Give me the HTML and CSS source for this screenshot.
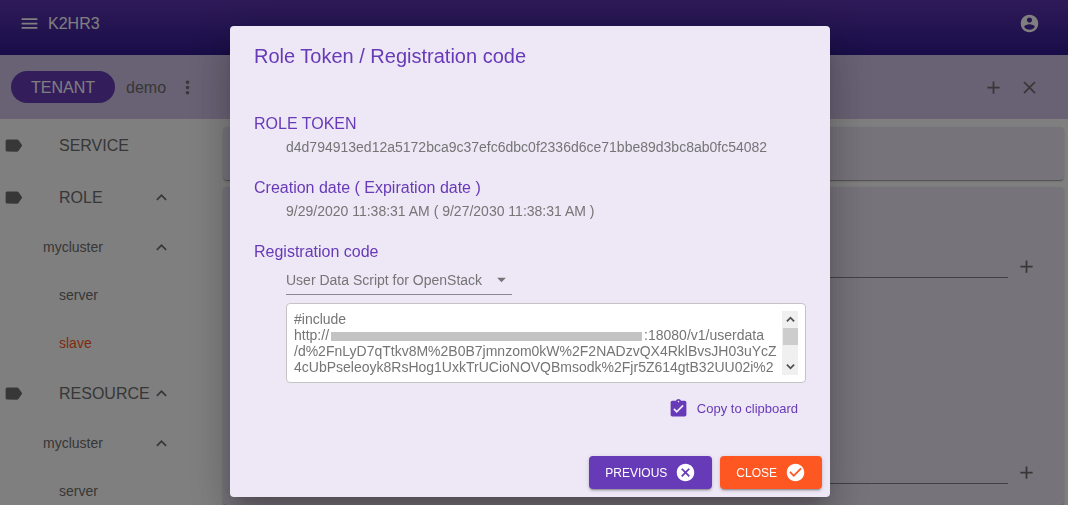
FILE: index.html
```html
<!DOCTYPE html>
<html lang="en">
<head>
<meta charset="utf-8">
<title>K2HR3</title>
<link rel="stylesheet" href="styles.css">
</head>
<body>
<svg class="sprite" aria-hidden="true">
  <symbol id="i-menu" viewBox="0 0 24 24"><path d="M3 18h18v-2H3v2zm0-5h18v-2H3v2zm0-7v2h18V6H3z"/></symbol>
  <symbol id="i-account" viewBox="0 0 24 24"><path d="M12 2C6.480 2 2 6.480 2 12s4.480 10 10 10 10-4.480 10-10S17.520 2 12 2zm0 3c1.660 0 3 1.340 3 3s-1.340 3-3 3-3-1.340-3-3 1.340-3 3-3zm0 14.200c-2.500 0-4.710-1.280-6-3.220.030-1.990 4-3.080 6-3.080 1.990 0 5.970 1.090 6 3.080-1.290 1.940-3.500 3.220-6 3.220z"/></symbol>
  <symbol id="i-more" viewBox="0 0 24 24"><path d="M12 8c1.100 0 2-.9 2-2s-.9-2-2-2-2 .9-2 2 .9 2 2 2zm0 2c-1.100 0-2 .9-2 2s.9 2 2 2 2-.9 2-2-.9-2-2-2zm0 6c-1.100 0-2 .9-2 2s.9 2 2 2 2-.9 2-2-.9-2-2-2z"/></symbol>
  <symbol id="i-add" viewBox="0 0 24 24"><path d="M19 13h-6v6h-2v-6H5v-2h6V5h2v6h6v2z"/></symbol>
  <symbol id="i-close" viewBox="0 0 24 24"><path d="M19 6.410L17.590 5 12 10.590 6.410 5 5 6.410 10.590 12 5 17.590 6.410 19 12 13.410 17.590 19 19 17.590 13.410 12z"/></symbol>
  <symbol id="i-label" viewBox="0 0 24 24"><path d="M17.630 5.840C17.270 5.330 16.670 5 16 5L5 5.010C3.900 5.010 3 5.900 3 7v10c0 1.100.9 1.990 2 1.990L16 19c.67 0 1.270-.33 1.630-.84L22 12l-4.370-6.160z"/></symbol>
  <symbol id="i-less" viewBox="0 0 24 24"><path d="M12 8l-6 6 1.410 1.410L12 10.830l4.590 4.580L18 14z"/></symbol>
  <symbol id="i-drop" viewBox="0 0 24 24"><path d="M7 10l5 5 5-5z"/></symbol>
  <symbol id="i-clip" viewBox="0 0 24 24"><path d="M19 3h-4.180C14.400 1.840 13.300 1 12 1c-1.300 0-2.400.84-2.820 2H5c-1.100 0-2 .9-2 2v14c0 1.100.9 2 2 2h14c1.100 0 2-.9 2-2V5c0-1.100-.9-2-2-2zm-7 0c.55 0 1 .45 1 1s-.45 1-1 1-1-.45-1-1 .45-1 1-1zm-2 14l-4-4 1.410-1.410L10 14.170l6.590-6.590L18 9l-8 8z"/></symbol>
  <symbol id="i-cancel" viewBox="0 0 24 24"><path d="M12 2C6.470 2 2 6.470 2 12s4.470 10 10 10 10-4.470 10-10S17.530 2 12 2zm5 13.590L15.590 17 12 13.410 8.410 17 7 15.590 10.590 12 7 8.410 8.410 7 12 10.590 15.590 7 17 8.410 13.410 12 17 15.590z"/></symbol>
  <symbol id="i-check" viewBox="0 0 24 24"><path d="M12 2C6.480 2 2 6.480 2 12s4.480 10 10 10 10-4.480 10-10S17.520 2 12 2zm-2 15l-5-5 1.410-1.410L10 14.170l7.590-7.590L19 8l-9 9z"/></symbol>
  <symbol id="i-up" viewBox="0 0 10 10"><path d="M1 7l4-4 4 4" fill="none" stroke="currentColor" stroke-width="2"/></symbol>
  <symbol id="i-down" viewBox="0 0 10 10"><path d="M1 3l4 4 4-4" fill="none" stroke="currentColor" stroke-width="2"/></symbol>
</svg>

<div class="app">
  <header class="appbar">
    <button class="icon-btn" aria-label="Menu"><svg class="icon"><use href="#i-menu"/></svg></button>
    <span class="brand">K2HR3</span>
    <button class="icon-btn push" aria-label="Account"><svg class="icon"><use href="#i-account"/></svg></button>
  </header>
  <div class="toolbar">
    <button class="chip">TENANT</button>
    <span class="tenant">demo</span>
    <button class="icon-btn" aria-label="More"><svg class="icon"><use href="#i-more"/></svg></button>
    <div class="tools push">
      <button class="icon-btn" aria-label="Add"><svg class="icon"><use href="#i-add"/></svg></button>
      <button class="icon-btn" aria-label="Close"><svg class="icon"><use href="#i-close"/></svg></button>
    </div>
  </div>
  <div class="body">
    <nav class="tree">
      <a class="node top" href="#"><svg class="icon"><use href="#i-label"/></svg><span class="name">SERVICE</span></a>
      <a class="node top" href="#"><svg class="icon"><use href="#i-label"/></svg><span class="name">ROLE</span><svg class="icon fold"><use href="#i-less"/></svg></a>
      <a class="node group" href="#"><span class="name">mycluster</span><svg class="icon fold"><use href="#i-less"/></svg></a>
      <a class="node leaf" href="#">server</a>
      <a class="node leaf selected" href="#">slave</a>
      <a class="node top" href="#"><svg class="icon"><use href="#i-label"/></svg><span class="name">RESOURCE</span><svg class="icon fold"><use href="#i-less"/></svg></a>
      <a class="node group" href="#"><span class="name">mycluster</span><svg class="icon fold"><use href="#i-less"/></svg></a>
      <a class="node leaf" href="#">server</a>
    </nav>
    <main class="content">
      <section class="card summary"></section>
      <section class="card detail">
        <div class="field"><input type="text" aria-label="Host name"><button class="icon-btn" aria-label="Add host name"><svg class="icon"><use href="#i-add"/></svg></button></div>
        <div class="field"><input type="text" aria-label="Host address"><button class="icon-btn" aria-label="Add host address"><svg class="icon"><use href="#i-add"/></svg></button></div>
      </section>
    </main>
  </div>
</div>

<div class="backdrop">
  <section class="dialog" role="dialog" aria-labelledby="dialog-title">
    <h2 class="title" id="dialog-title">Role Token / Registration code</h2>
    <h3 class="label">ROLE TOKEN</h3>
    <p class="value">d4d794913ed12a5172bca9c37efc6dbc0f2336d6ce71bbe89d3bc8ab0fc54082</p>
    <h3 class="label">Creation date ( Expiration date )</h3>
    <p class="value">9/29/2020 11:38:31 AM ( 9/27/2030 11:38:31 AM )</p>
    <h3 class="label"><label for="code-type">Registration code</label></h3>
    <div class="select">
      <select id="code-type"><option>User Data Script for OpenStack</option></select>
      <svg class="icon arrow"><use href="#i-drop"/></svg>
    </div>
    <div class="code">
      <textarea aria-label="Registration code text" readonly rows="4">#include
http://&nbsp;&nbsp;&nbsp;&nbsp;&nbsp;&nbsp;&nbsp;&nbsp;&nbsp;&nbsp;&nbsp;&nbsp;&nbsp;&nbsp;&nbsp;&nbsp;&nbsp;&nbsp;&nbsp;&nbsp;&nbsp;&nbsp;&nbsp;&nbsp;&nbsp;&nbsp;&nbsp;&nbsp;&nbsp;&nbsp;&nbsp;&nbsp;&nbsp;&nbsp;&nbsp;&nbsp;&nbsp;&nbsp;&nbsp;&nbsp;&nbsp;&nbsp;&nbsp;&nbsp;&nbsp;&nbsp;&nbsp;&nbsp;&nbsp;&nbsp;&nbsp;&nbsp;&nbsp;&nbsp;&nbsp;&nbsp;&nbsp;&nbsp;&nbsp;&nbsp;&nbsp;&nbsp;&nbsp;&nbsp;&nbsp;&nbsp;&nbsp;&nbsp;&nbsp;&nbsp;&nbsp;&nbsp;&nbsp;&nbsp;&nbsp;&nbsp;&nbsp;&nbsp;&nbsp;&nbsp;&nbsp;:18080/v1/userdata
/d%2FnLyD7qTtkv8M%2B0B7jmnzom0kW%2F2NADzvQX4RklBvsJH03uYcZ
4cUbPseleoyk8RsHog1UxkTrUCioNOVQBmsodk%2Fjr5Z614gtB32UU02i%2</textarea>
      <span class="mask"></span>
      <div class="scroll" aria-hidden="true">
        <svg class="tick"><use href="#i-up"/></svg>
        <span class="thumb"></span>
        <svg class="tick last"><use href="#i-down"/></svg>
      </div>
    </div>
    <button class="copy"><svg class="icon"><use href="#i-clip"/></svg>Copy to clipboard</button>
    <div class="actions">
      <button class="btn primary">PREVIOUS<svg class="icon"><use href="#i-cancel"/></svg></button>
      <button class="btn accent">CLOSE<svg class="icon"><use href="#i-check"/></svg></button>
    </div>
  </section>
</div>
</body>
</html>
```
FILE: styles.css
```css
* { box-sizing: border-box; }
body {
  margin: 0;
  font-family: "Liberation Sans", Arial, sans-serif;
  font-size: 14px;
  color: #757575;
  background: #fff;
}
button, input, select, textarea { font: inherit; color: inherit; border: 0; background: none; padding: 0; margin: 0; outline: 0; }
h2, h3, p { margin: 0; font-weight: 400; }
.sprite { position: absolute; width: 0; height: 0; }
.icon { width: 21px; height: 21px; fill: currentColor; flex: none; display: block; }
.push { margin-left: auto; }

.app { height: 100vh; overflow: hidden; display: flex; flex-direction: column; }
.appbar {
  flex: none; height: 55px; padding: 0 28px 8px 19px;
  display: flex; align-items: center; gap: 8px;
  color: #fff; background: linear-gradient(#5e35b1, #311b92);
  font-size: 16px;
}
.brand, .tenant, .chip, .top .name { line-height: 20px; padding-top: 1px; }
.toolbar {
  flex: none; height: 64px; padding: 0 28px 0 11px;
  display: flex; align-items: center; gap: 11px;
  background: #d1c4e9; font-size: 16px;
}
.toolbar, .node { color: #6e6e6e; }
.toolbar .chip { height: 32px; padding: 1px 20px 0; border-radius: 16px; background: #673ab7; color: #fff; }
.tools { display: flex; gap: 15px; }
.body { flex: 1; min-height: 0; display: flex; }
.tree { flex: none; width: 220px; }
.node { display: flex; align-items: center; height: 48px; text-decoration: none; padding-right: 48px; }
.node .name { flex: 1; }
.top { height: 52px; padding-left: 3px; font-size: 16px; gap: 35px; }
.top .fold { margin-left: -35px; }
.group { padding-left: 43px; }
.leaf { padding-left: 59px; }
.node.selected { color: #ff5722; }
.content { flex: 1; display: flex; flex-direction: column; gap: 7px; padding: 8px 4px 0 3px; }
.card { background: #ede7f6; border-radius: 4px; box-shadow: 0 2px 1px -1px rgba(0,0,0,.2), 0 1px 1px rgba(0,0,0,.14), 0 1px 3px rgba(0,0,0,.12); }
.summary { flex: none; height: 53px; }
.detail { flex: 1; padding: 58px 27px 0 24px; display: flex; flex-direction: column; gap: 173px; }
.field { display: flex; gap: 8px; align-items: flex-start; }
.field input { flex: 1; height: 33px; border-bottom: 1px solid #858585; }
.field .icon-btn { padding-top: 11px; color: #6e6e6e; }

.backdrop {
  position: fixed; inset: 0; overflow: hidden;
  display: flex; align-items: flex-start; justify-content: center;
  padding: 26px 8px 0 0; background: rgba(0,0,0,.5);
}
.dialog {
  width: 600px; max-width: 100%; padding: 16px 8px 8px 24px;
  display: flex; flex-direction: column;
  border-radius: 4px; background: #ede7f6;
  box-shadow: 0 11px 15px -7px rgba(0,0,0,.2), 0 24px 38px 3px rgba(0,0,0,.14), 0 9px 46px 8px rgba(0,0,0,.12);
}
.title { font-size: 20px; line-height: 28px; color: #673ab7; margin-bottom: 42px; }
.label { font-size: 16px; line-height: 24px; color: #673ab7; }
.value { line-height: 22px; margin: 0 0 18px 32px; }
.select { position: relative; align-self: flex-start; width: 226px; margin: 2px 0 8px 32px; border-bottom: 1px solid #8b8790; }
.select select { appearance: none; display: block; width: 100%; height: 28px; padding-right: 24px; }
.arrow { position: absolute; right: 0; top: 3px; pointer-events: none; }
.code {
  position: relative; display: flex; margin: 0 16px 0 32px; padding: 7px;
  border: 1px solid #c4c4c4; border-radius: 4px; background: #fff;
}
.code textarea { flex: 1; height: 64px; line-height: 16px; resize: none; overflow: hidden; white-space: pre; display: block; }
.mask { position: absolute; left: 44px; top: 28px; width: 311px; height: 9px; background: #c3c3c3; }
.scroll { width: 16px; height: 64px; background: #f0f0f0; color: #505050; display: flex; flex-direction: column; align-items: center; }
.tick { width: 9px; height: 17px; flex: none; }
.last { margin-top: auto; }
.thumb { width: 15px; height: 17px; background: #cdcdcd; }
.copy { align-self: flex-end; display: flex; align-items: center; gap: 8px; height: 24px; margin: 13px 24px 36px 0; color: #673ab7; font-size: 13px; }
.actions { display: flex; justify-content: flex-end; gap: 8px; }
.btn {
  display: flex; align-items: center; gap: 8px; height: 33px; padding: 0 16px;
  border-radius: 4px; color: #fff; font-size: 12px;
  box-shadow: 0 3px 1px -2px rgba(0,0,0,.2), 0 2px 2px rgba(0,0,0,.14), 0 1px 5px rgba(0,0,0,.12);
}
.primary { background: #673ab7; }
.accent { background: #ff5722; }
```
